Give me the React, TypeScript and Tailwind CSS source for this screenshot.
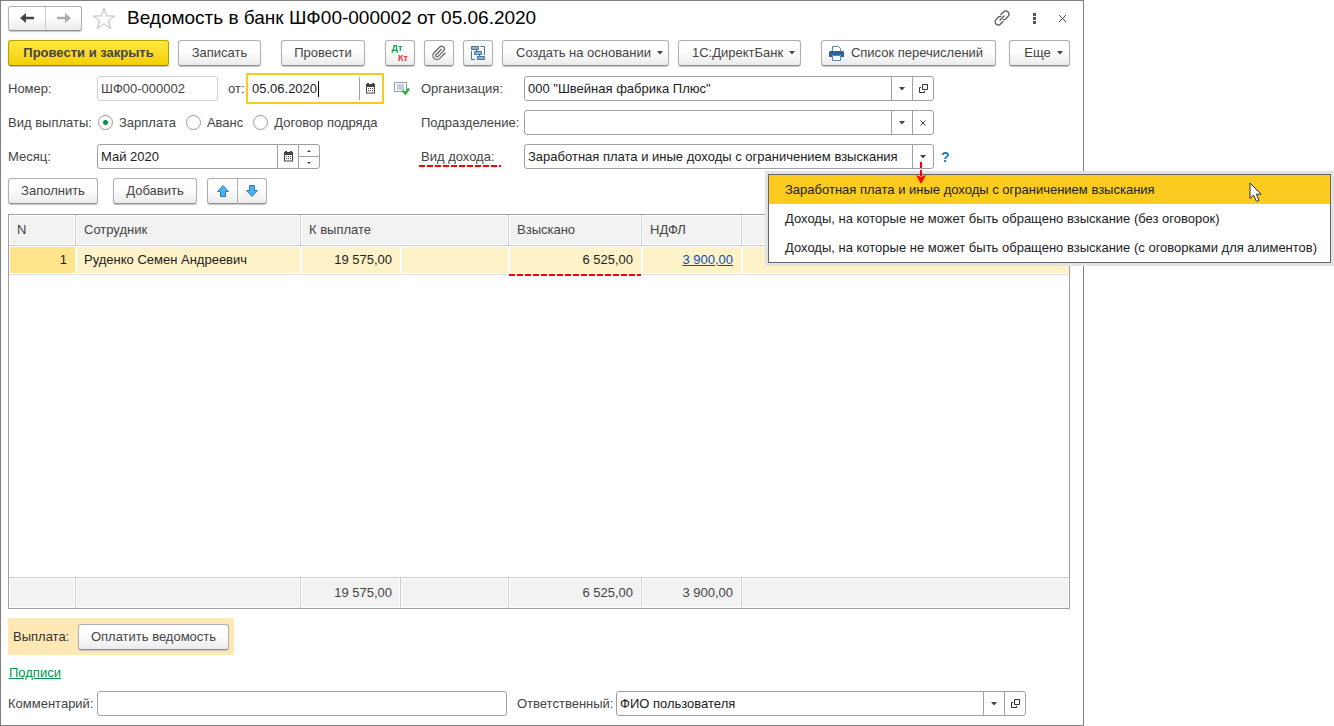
import React from "react";

const raised =
  "flex h-[26px] cursor-default items-center justify-center rounded-[3px] border border-[#b0b0b0] border-b-[#8f8f8f] bg-linear-to-b from-white from-40% to-[#ebebeb] text-[#444] shadow-[0_1px_1px_#c4c4c4]";

function Btn({ className = "", children, label }: { className?: string; children: React.ReactNode; label?: string }) {
  return (
    <button type="button" aria-label={label} className={`${raised} ${className}`}>
      {children}
    </button>
  );
}

function Caret() {
  return (
    <svg width="6" height="4" viewBox="0 0 6 4" aria-hidden="true">
      <path d="M0 0h6L3 3.5z" fill="#444" />
    </svg>
  );
}

function CalendarIcon() {
  return (
    <svg width="11" height="11" viewBox="0 0 11 11" aria-hidden="true">
      <path d="M2 0h2v1h3V0h2v1h1v9.500H1V1h1zM2 4v5.500h7V4z" fill="#444" fillRule="evenodd" />
      <path d="M3 5h1v1H3zM5 5h1v1H5zM7 5h1v1H7zM3 7h1v1H3zM5 7h1v1H5zM7 7h1v1H7z" fill="#444" />
    </svg>
  );
}

function OpenIcon() {
  return (
    <svg width="9" height="9" viewBox="0 0 9 9" fill="none" stroke="#333" aria-hidden="true">
      <path d="M3.5 0.5h5v5h-5zM2 3.5H0.5v5h5V7" />
    </svg>
  );
}

function Dashes({ className }: { className: string }) {
  return (
    <svg className={`pointer-events-none absolute h-[2px] ${className}`} aria-hidden="true">
      <path d="M0 1H600" stroke="#f00" strokeWidth="2" strokeDasharray="6 2" />
    </svg>
  );
}

const field = "flex h-[25px] overflow-hidden rounded-[3px] border border-[#a0a0a0] bg-white text-[#222]";
const entry = "h-full w-0 min-w-0 flex-1 bg-transparent pl-[3px] outline-none";
const side = "flex w-[21px] shrink-0 items-center justify-center border-l border-[#a0a0a0]";

function Lookup({ id, value, open }: { id: string; value: string; open: boolean }) {
  return (
    <div className={`${field} flex-1`}>
      <input id={id} defaultValue={value} className={entry} />
      <button type="button" aria-label="Выбрать" className={side}>
        <Caret />
      </button>
      <button type="button" aria-label={open ? "Открыть" : "Очистить"} className={side}>
        {open ? (
          <OpenIcon />
        ) : (
          <svg width="6" height="6" viewBox="0 0 6 6" stroke="#444" aria-hidden="true">
            <path d="M0.5 0.5l5 5M5.5 0.5l-5 5" />
          </svg>
        )}
      </button>
    </div>
  );
}

function Radio({ label, checked }: { label: string; checked?: boolean }) {
  return (
    <label className="flex items-center gap-[6px]">
      <input
        type="radio"
        name="kind"
        defaultChecked={checked}
        className="h-[15px] w-[15px] appearance-none rounded-full border border-[#999] bg-white checked:bg-[radial-gradient(circle,#009646_0_2px,#fff_3px)]"
      />
      {label}
    </label>
  );
}

const head = "border-r border-b border-[#ccc] bg-[#f2f2f2] px-[8px] text-left font-normal shadow-[inset_0_0_0_1px_#fff] last:border-r-0";
const cell = "border-r border-b border-r-white border-b-[#e2e2e2] px-[8px] shadow-[inset_1px_1px_0_#fff,inset_0_-1px_0_#fff] last:border-r-0";
const foot = "border-t border-r border-[#ccc] bg-[#f2f2f2] px-[8px] text-right shadow-[inset_0_0_0_1px_#fff] last:border-r-0";

const options = [
  "Заработная плата и иные доходы с ограничением взыскания",
  "Доходы, на которые не может быть обращено взыскание (без оговорок)",
  "Доходы, на которые не может быть обращено взыскание (с оговорками для алиментов)",
];

export default function App() {
  return (
    <div className="flex min-h-screen bg-white font-['Liberation_Sans',Arial,sans-serif] text-[13px] leading-4 text-[#444]">
      <main className="mr-[250px] flex min-w-0 flex-1 flex-col border border-[#808080] pr-[13px] pb-[8px] pl-[7px]">
        <header className="flex h-[34px] items-center">
          <div className="flex h-[25px] rounded-[3px] border border-[#b0b0b0] border-b-[#8f8f8f] bg-linear-to-b from-white from-40% to-[#ebebeb] shadow-[0_1px_1px_#c4c4c4]">
            <button type="button" aria-label="Назад" className="flex w-9 items-center justify-center">
              <svg width="14" height="10" viewBox="0 0 14 10" aria-hidden="true">
                <path d="M0 5L6 0v3.700h8v2.600H6V10z" fill="#444" />
              </svg>
            </button>
            <button type="button" aria-label="Вперед" className="flex w-9 items-center justify-center border-l border-[#ccc]">
              <svg width="14" height="10" viewBox="0 0 14 10" aria-hidden="true">
                <path d="M14 5L8 0v3.700H0v2.600h8V10z" fill="#aaa" />
              </svg>
            </button>
          </div>
          <button type="button" aria-label="В избранное" className="ml-[10px]">
            <svg width="24" height="23" viewBox="0 0 24 23" fill="none" stroke="#b4bcc4" aria-hidden="true">
              <path d="M12 1.500l2.700 7.500h8l-6.300 4.800 2.400 7.700-6.800-4.600-6.800 4.600 2.400-7.700L1.300 9h8z" />
            </svg>
          </button>
          <h1 className="ml-[11px] text-[19px] leading-6 text-black">Ведомость в банк ШФ00-000002 от 05.06.2020</h1>
          <div className="ml-auto flex items-center gap-[23px]">
            <button type="button" aria-label="Ссылка">
              <svg width="16" height="16" viewBox="0 0 16 16" fill="none" stroke="#555" strokeWidth="1.200" strokeLinecap="round" aria-hidden="true">
                <path d="M7 4.500L9.500 2A2.700 2.700 0 0 1 14 6.500L11.500 9q-1 .9-2.300.6" />
                <path d="M9 11.500L6.500 14A2.700 2.700 0 0 1 2 9.500L4.500 7q1-.9 2.300-.6M6 10l4-4" />
              </svg>
            </button>
            <button type="button" aria-label="Меню">
              <svg width="3" height="11" viewBox="0 0 3 11" fill="#555" aria-hidden="true">
                <path d="M0 0h3v3H0zM0 4h3v3H0zM0 8h3v3H0z" />
              </svg>
            </button>
            <button type="button" aria-label="Закрыть" className="mr-[4px]">
              <svg width="7" height="7" viewBox="0 0 7 7" stroke="#444" aria-hidden="true">
                <path d="M0 0l7 7M7 0L0 7" />
              </svg>
            </button>
          </div>
        </header>

        <div className="mt-[5px] flex gap-5">
          <div className="flex gap-[9px]">
            <button
              type="button"
              className="h-[26px] w-[161px] rounded-[3px] border border-[#b8a000] border-b-[#958200] bg-linear-to-b from-[#ffe83a] to-[#f3cf00] font-bold shadow-[0_1px_1px_#c4c4c4]"
            >
              Провести и закрыть
            </button>
            <Btn className="w-[83px]">Записать</Btn>
          </div>
          <Btn className="w-[84px]">Провести</Btn>
          <div className="flex gap-[9px]">
            <Btn className="w-[30px]" label="Дт Кт">
              <span className="flex flex-col text-[9px] leading-[10px] font-bold">
                <span className="pr-[6px] text-[#009646]">Дт</span>
                <span className="pl-[6px] text-[#e33]">Кт</span>
              </span>
            </Btn>
            <Btn className="w-[30px]" label="Файлы">
              <svg width="16" height="16" viewBox="0 0 24 24" fill="none" stroke="#666" strokeWidth="1.900" aria-hidden="true">
                <path d="m16 6-8.400 8.600a2 2 0 0 0 2.800 2.800l8.400-8.600a4 4 0 1 0-5.700-5.700l-8.400 8.500a6 6 0 1 0 8.500 8.500l8.400-8.500" />
              </svg>
            </Btn>
            <Btn className="w-[30px]" label="Структура">
              <svg width="15" height="15" viewBox="0 0 15 15" fill="none" stroke="#3f74a3" aria-hidden="true">
                <path d="M0.500 0.500h7v3h-7zM3.500 5.500h7v3h-7zM6.500 10.500h7v3h-7z" fill="#8db4d6" />
                <path d="M9.500 0.500h4V9M4 13.500H0.500V5M5.500 3.500v2M8.500 8.500v2" />
              </svg>
            </Btn>
            <Btn className="w-[167px] gap-[6px] pl-2">
              Создать на основании <Caret />
            </Btn>
            <Btn className="w-[123px] gap-[6px] pl-2">
              1С:ДиректБанк <Caret />
            </Btn>
          </div>
          <div className="flex flex-1 justify-between">
            <Btn className="w-[175px] gap-[7px] pr-[5px]">
              <svg width="15" height="15" viewBox="0 0 15 15" aria-hidden="true">
                <path d="M3.500 5V0.500h6l2 2V5" fill="#fff" stroke="#5b87ad" />
                <path d="M1 5h13l1 1v5h-3V9H3v2H0V6z" fill="#2f6391" />
                <path d="M3.500 9.500h8v5h-8z" fill="#fff" stroke="#5b87ad" />
              </svg>
              Список перечислений
            </Btn>
            <Btn className="w-[61px] gap-[6px] pl-2">
              Еще <Caret />
            </Btn>
          </div>
        </div>

        <div className="mt-[10px] flex">
          <div className="flex w-[413px] shrink-0 flex-col gap-[9px]">
            <div className="flex h-[25px] items-center">
              <label htmlFor="num" className="w-[89px]">Номер:</label>
              <input id="num" defaultValue="ШФ00-000002" className="h-[25px] w-[121px] rounded-[3px] border border-[#d2d2d2] pl-[3px] outline-none" />
              <label htmlFor="date" className="w-[28px] pl-[10px]">от:</label>
              <div className="flex h-[31px] w-[138px] shrink-0 items-center border-2 border-[#fbc91f] bg-white text-[#222]">
                <div className="flex flex-1 items-center pl-[4px]">
                  <input id="date" defaultValue="05.06.2020" className="w-[66px] outline-none" />
                  <span className="h-4 w-px bg-black" />
                </div>
                <button type="button" aria-label="Календарь" className="flex h-[23px] w-[23px] items-center justify-center border-l border-[#a0a0a0] pr-[2px]">
                  <CalendarIcon />
                </button>
              </div>
              <svg className="ml-[10px]" width="16" height="13" viewBox="0 0 16 13" aria-hidden="true">
                <path d="M0.500 0.500h12v9h-12z" fill="#fff" stroke="#8a9fb3" />
                <path d="M3 3h7M3 5h7M3 7h7" stroke="#8a9fb3" />
                <path d="M8.500 8.500l3 3L15 6.500" fill="none" stroke="#2bb34a" strokeWidth="2.400" />
              </svg>
            </div>
            <div className="flex h-[25px] items-center">
              <span className="w-[90px]">Вид выплаты:</span>
              <div className="flex gap-[10px]">
                <Radio label="Зарплата" checked />
                <Radio label="Аванс" />
                <Radio label="Договор подряда" />
              </div>
            </div>
            <div className="flex h-[25px] items-center">
              <label htmlFor="month" className="w-[89px]">Месяц:</label>
              <div className={`${field} w-[223px]`}>
                <input id="month" defaultValue="Май 2020" className={entry} />
                <button type="button" aria-label="Календарь" className={side}>
                  <CalendarIcon />
                </button>
                <div className="flex w-[21px] flex-col border-l border-[#a0a0a0]">
                  <button type="button" aria-label="Больше" className="flex flex-1 items-center justify-center border-b border-[#a0a0a0]">
                    <svg width="4" height="2" viewBox="0 0 4 2" aria-hidden="true"><path d="M0 2h4L2 0z" fill="#444" /></svg>
                  </button>
                  <button type="button" aria-label="Меньше" className="flex flex-1 items-center justify-center">
                    <svg width="4" height="2" viewBox="0 0 4 2" aria-hidden="true"><path d="M0 0h4L2 2z" fill="#444" /></svg>
                  </button>
                </div>
              </div>
            </div>
          </div>

          <div className="flex w-[530px] flex-col gap-[9px]">
            <div className="flex items-center pr-[17px]">
              <label htmlFor="org" className="w-[103px]">Организация:</label>
              <Lookup id="org" value={'000 "Швейная фабрика Плюс"'} open />
            </div>
            <div className="flex items-center pr-[17px]">
              <label htmlFor="dep" className="w-[103px]">Подразделение:</label>
              <Lookup id="dep" value="" open={false} />
            </div>
            <div className="flex items-center">
              <label htmlFor="income" className="relative w-[103px] shrink-0">
                Вид дохода:
                <Dashes className="-bottom-[2px] -left-[2px] w-[82px]" />
              </label>
              <div className="relative min-w-0 flex-1">
                <div className={field}>
                  <select id="income" className="h-full w-0 min-w-0 flex-1 appearance-none pl-[3px] outline-none">
                    {options.map((o) => (
                      <option key={o}>{o}</option>
                    ))}
                  </select>
                  <span className={side}>
                    <Caret />
                  </span>
                </div>
                <ul
                  role="listbox"
                  aria-label="Вид дохода"
                  className="absolute top-[30px] left-[244px] z-10 w-[563px] border border-[#666] bg-white text-[#222] shadow-[0_0_0_3px_#e3e3e3]"
                >
                  {options.map((o, i) => (
                    <li
                      key={o}
                      role="option"
                      aria-selected={i === 0}
                      className="flex h-[29px] items-center pl-4 whitespace-nowrap aria-selected:bg-[#fbcb20]"
                    >
                      {o}
                    </li>
                  ))}
                </ul>
                <svg className="pointer-events-none absolute top-[38px] left-[725px] z-20" width="13" height="21" viewBox="0 0 13 21" aria-hidden="true">
                  <path d="M1 1v15.500l3.700-3.400 2.700 6.300 2.600-1.100-2.700-6.100h4.800z" fill="#fff" stroke="#333" />
                </svg>
                <svg className="pointer-events-none absolute top-[16px] right-[8px] z-20" width="10" height="24" viewBox="0 0 10 24" aria-hidden="true">
                  <path d="M5 2v16" stroke="#f00" strokeWidth="2" strokeDasharray="6 2" />
                  <path d="M0 15l5 2L10 15 5 24z" fill="#f00" />
                </svg>
              </div>
              <a href="#help" aria-label="Справка" className="w-[17px] shrink-0 pl-[7px] text-[14px] font-bold text-[#1a78c2]">?</a>
            </div>
          </div>
        </div>

        <div className="mt-[9px] flex">
          <Btn className="w-[90px]">Заполнить</Btn>
          <Btn className="ml-[15px] w-[84px]">Добавить</Btn>
          <div className="ml-[10px] flex">
            <Btn className="w-[31px] rounded-r-none" label="Вверх">
              <svg width="12" height="12" viewBox="0 0 12 12" aria-hidden="true">
                <path d="M6 0.500l5.500 6H8.500v5h-5v-5h-3z" fill="#4db3f0" stroke="#2a7fb5" />
              </svg>
            </Btn>
            <Btn className="w-[29px] rounded-l-none border-l-0" label="Вниз">
              <svg width="12" height="12" viewBox="0 0 12 12" aria-hidden="true">
                <path d="M6 11.500l5.500-6H8.500v-5h-5v5h-3z" fill="#4db3f0" stroke="#2a7fb5" />
              </svg>
            </Btn>
          </div>
        </div>

        <div className="mt-[10px] border border-[#a0a0a0]">
          <table className="w-full table-fixed border-separate border-spacing-0">
            <colgroup>
              <col className="w-[67px]" />
              <col className="w-[225px]" />
              <col className="w-[100px]" />
              <col className="w-[108px]" />
              <col className="w-[133px]" />
              <col className="w-[100px]" />
              <col />
            </colgroup>
            <thead>
              <tr className="h-[31px]">
                <th className={head}>N</th>
                <th className={head}>Сотрудник</th>
                <th className={head} colSpan={2}>К выплате</th>
                <th className={head}>Взыскано</th>
                <th className={head}>НДФЛ</th>
                <th className={head} />
              </tr>
            </thead>
            <tbody className="text-[#222]">
              <tr className="h-[29px] text-right">
                <td className={`${cell} bg-[#ffe48c]`}>1</td>
                <td className={`${cell} bg-[#fef2c8] text-left`}>Руденко Семен Андреевич</td>
                <td className={`${cell} bg-[#fef2c8]`}>19 575,00</td>
                <td className={`${cell} bg-[#fef2c8]`} />
                <td className={`${cell} relative bg-[#fef2c8]`}>
                  6 525,00
                  <Dashes className="-bottom-[2px] left-0 w-full" />
                </td>
                <td className={`${cell} bg-[#fef2c8]`}>
                  <a href="#ndfl" className="text-[#0a50b4] underline">3 900,00</a>
                </td>
                <td className={`${cell} bg-[#fef2c8]`} />
              </tr>
              <tr className="h-[302px]">
                <td colSpan={7} />
              </tr>
            </tbody>
            <tfoot>
              <tr className="h-[31px]">
                <td className={foot} />
                <td className={foot} />
                <td className={foot}>19 575,00</td>
                <td className={foot} />
                <td className={foot}>6 525,00</td>
                <td className={foot}>3 900,00</td>
                <td className={foot} />
              </tr>
            </tfoot>
          </table>
        </div>

        <div className="mt-[9px] flex h-[37px] w-[226px] items-center justify-between bg-[#ffe8b4] px-[5px] text-[#333]">
          Выплата:
          <Btn className="w-[151px]">Оплатить ведомость</Btn>
        </div>
        <a href="#sign" className="mt-[10px] ml-px self-start text-[#009646] underline">Подписи</a>
        <div className="mt-[10px] flex items-center">
          <label htmlFor="note" className="w-[89px]">Комментарий:</label>
          <input id="note" className="h-[25px] w-[410px] rounded-[3px] border border-[#a0a0a0] px-[3px] outline-none" />
          <label htmlFor="resp" className="w-[109px] pl-[10px]">Ответственный:</label>
          <div className="flex w-[410px]">
            <Lookup id="resp" value="ФИО пользователя" open />
          </div>
        </div>
      </main>
    </div>
  );
}
